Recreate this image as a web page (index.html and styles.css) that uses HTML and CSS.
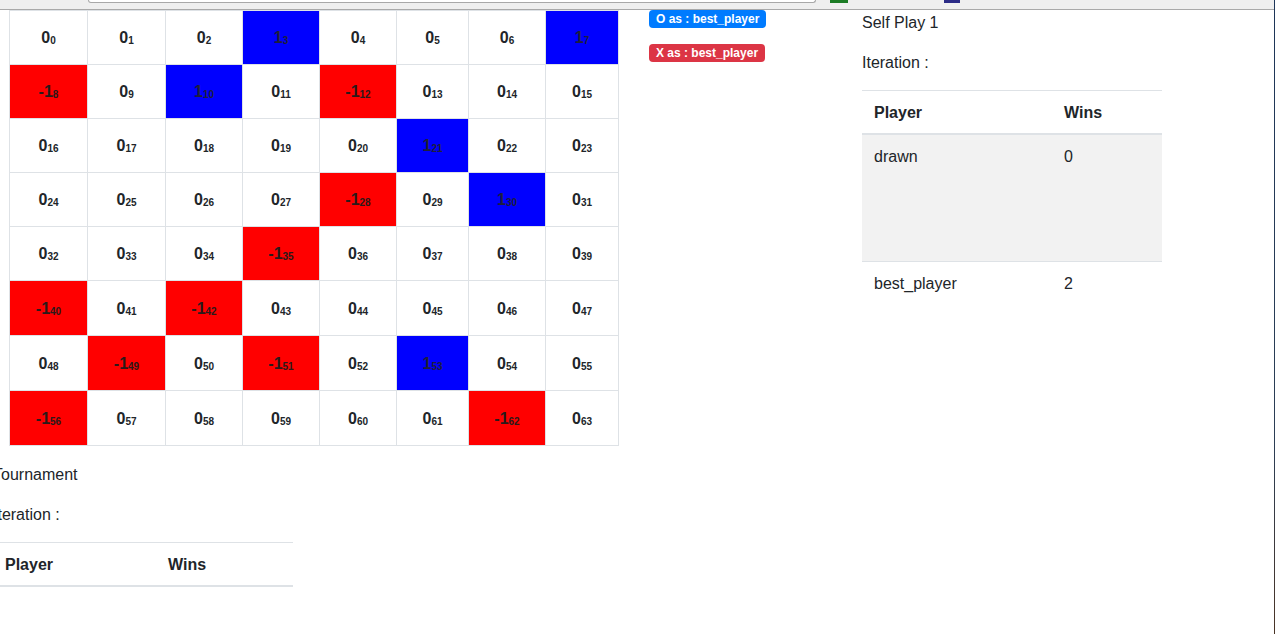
FILE: index.html
```html
<!DOCTYPE html>
<html>
<head>
<meta charset="utf-8">
<link rel="stylesheet" href="styles.css">
</head>
<body>
<div class="window">
  <div class="chrome">
    <div class="search"></div>
    <div class="ext ext-green"></div>
    <div class="ext ext-navy"></div>
  </div>
  <div class="main">
    <div class="left">
      <table class="board">
        <colgroup>
          <col class="w78"><col class="w78"><col class="w77"><col class="w77"><col class="w77"><col class="w72"><col class="w77"><col class="w73">
        </colgroup>
        <tr class="r54">
          <td><b>0</b><sub>0</sub></td><td><b>0</b><sub>1</sub></td><td><b>0</b><sub>2</sub></td><td class="blue"><b>1</b><sub>3</sub></td><td><b>0</b><sub>4</sub></td><td><b>0</b><sub>5</sub></td><td><b>0</b><sub>6</sub></td><td class="blue"><b>1</b><sub>7</sub></td>
        </tr>
        <tr class="r54">
          <td class="red"><b>-1</b><sub>8</sub></td><td><b>0</b><sub>9</sub></td><td class="blue"><b>1</b><sub>10</sub></td><td><b>0</b><sub>11</sub></td><td class="red"><b>-1</b><sub>12</sub></td><td><b>0</b><sub>13</sub></td><td><b>0</b><sub>14</sub></td><td><b>0</b><sub>15</sub></td>
        </tr>
        <tr class="r54">
          <td><b>0</b><sub>16</sub></td><td><b>0</b><sub>17</sub></td><td><b>0</b><sub>18</sub></td><td><b>0</b><sub>19</sub></td><td><b>0</b><sub>20</sub></td><td class="blue"><b>1</b><sub>21</sub></td><td><b>0</b><sub>22</sub></td><td><b>0</b><sub>23</sub></td>
        </tr>
        <tr class="r54">
          <td><b>0</b><sub>24</sub></td><td><b>0</b><sub>25</sub></td><td><b>0</b><sub>26</sub></td><td><b>0</b><sub>27</sub></td><td class="red"><b>-1</b><sub>28</sub></td><td><b>0</b><sub>29</sub></td><td class="blue"><b>1</b><sub>30</sub></td><td><b>0</b><sub>31</sub></td>
        </tr>
        <tr class="r54">
          <td><b>0</b><sub>32</sub></td><td><b>0</b><sub>33</sub></td><td><b>0</b><sub>34</sub></td><td class="red"><b>-1</b><sub>35</sub></td><td><b>0</b><sub>36</sub></td><td><b>0</b><sub>37</sub></td><td><b>0</b><sub>38</sub></td><td><b>0</b><sub>39</sub></td>
        </tr>
        <tr class="r55">
          <td class="red"><b>-1</b><sub>40</sub></td><td><b>0</b><sub>41</sub></td><td class="red"><b>-1</b><sub>42</sub></td><td><b>0</b><sub>43</sub></td><td><b>0</b><sub>44</sub></td><td><b>0</b><sub>45</sub></td><td><b>0</b><sub>46</sub></td><td><b>0</b><sub>47</sub></td>
        </tr>
        <tr class="r55">
          <td><b>0</b><sub>48</sub></td><td class="red"><b>-1</b><sub>49</sub></td><td><b>0</b><sub>50</sub></td><td class="red"><b>-1</b><sub>51</sub></td><td><b>0</b><sub>52</sub></td><td class="blue"><b>1</b><sub>53</sub></td><td><b>0</b><sub>54</sub></td><td><b>0</b><sub>55</sub></td>
        </tr>
        <tr class="r55">
          <td class="red"><b>-1</b><sub>56</sub></td><td><b>0</b><sub>57</sub></td><td><b>0</b><sub>58</sub></td><td><b>0</b><sub>59</sub></td><td><b>0</b><sub>60</sub></td><td><b>0</b><sub>61</sub></td><td class="red"><b>-1</b><sub>62</sub></td><td><b>0</b><sub>63</sub></td>
        </tr>
      </table>
      <p class="txt">Tournament</p>
      <p class="txt">Iteration :</p>
      <table class="stats stats-left">
        <thead>
          <tr><th class="c1">Player</th><th>Wins</th></tr>
        </thead>
      </table>
    </div>
    <div class="badges">
      <span class="badge badge-blue">O as : best_player</span>
      <span class="badge badge-red">X as : best_player</span>
    </div>
    <div class="selfplay">
      <p class="txt">Self Play 1</p>
      <p class="txt">Iteration :</p>
      <table class="stats stats-right">
        <thead>
          <tr><th class="c1">Player</th><th>Wins</th></tr>
        </thead>
        <tbody>
          <tr class="striped tall"><td>drawn</td><td>0</td></tr>
          <tr><td>best_player</td><td>2</td></tr>
        </tbody>
      </table>
    </div>
  </div>
</div>
<div class="edge"></div>
</body>
</html>
```

FILE: styles.css
```css
html, body {
  margin: 0;
  padding: 0;
  height: 100%;
  overflow: hidden;
  background: #fff;
}
body {
  display: flex;
  font-family: "Liberation Sans", Arial, sans-serif;
  font-size: 16px;
  line-height: 24px;
  color: #212529;
}
.window {
  flex: 1;
  min-width: 0;
  display: flex;
  flex-direction: column;
}
.edge {
  width: 1px;
  background: linear-gradient(#1d3558, #2c3e55 70%, #4a3426);
}
.chrome {
  height: 9px;
  background: #efefef;
  border-bottom: 1px solid #a9a9a9;
  display: flex;
  align-items: flex-start;
  overflow: hidden;
}
.search {
  margin-left: 88px;
  width: 726px;
  height: 2px;
  background: #fff;
  border: 1px solid #a8a8a8;
  border-top: none;
  border-radius: 0 0 4px 4px;
}
.ext {
  height: 3px;
}
.ext-green {
  margin-left: 14px;
  width: 18px;
  background: #1c7c25;
}
.ext-navy {
  margin-left: 96px;
  width: 16px;
  background: #2b2b86;
}
.main {
  display: flex;
  align-items: flex-start;
}
.left {
  margin-left: -7px;
  width: 626px;
}
.board {
  margin-left: 16px;
  border-collapse: collapse;
  table-layout: fixed;
  width: 610px;
  margin-bottom: 16px;
}
.w78 { width: 78px; }
.w77 { width: 77px; }
.w73 { width: 73px; }
.w72 { width: 72px; }
.r54 { height: 54px; }
.r55 { height: 55px; }
.board td {
  border: 1px solid #dee2e6;
  padding: 0;
  text-align: center;
  vertical-align: middle;
  font-family: "Liberation Sans", Arial, sans-serif;
  font-weight: 700;
  font-size: 16px;
  line-height: 20px;
  color: #212529;
  white-space: nowrap;
}
.board td b {
  font-weight: 700;
  padding-top: 1px;
  display: inline-block;
}
.board sub {
  font-size: 10px;
  font-weight: 700;
  vertical-align: -1px;
  line-height: 0;
}
.board td.blue { background: #0000ff; color: #1f1f3a; }
.board td.red { background: #ff0000; color: #2a1a1a; }
.txt {
  margin: 0 0 16px 0;
  padding-top: 1px;
  height: 23px;
}
.badges {
  margin-left: 30px;
  width: 213px;
  display: flex;
  flex-direction: column;
  align-items: flex-start;
  gap: 16px;
}
.badge {
  display: inline-block;
  font-family: "Liberation Sans", Arial, sans-serif;
  font-size: 12px;
  font-weight: 700;
  line-height: 12px;
  padding: 3px 7px;
  border-radius: 4px;
  color: #fff;
}
.badge-blue { background: #007bff; }
.badge-red { background: #dc3545; }
.selfplay {
  width: 300px;
}
.stats {
  width: 300px;
  border-collapse: collapse;
  margin-bottom: 16px;
}
.stats th, .stats td {
  text-align: left;
  padding: 10px 12px 8px 12px;
  border-top: 1px solid #dee2e6;
  vertical-align: top;
  line-height: 24px;
}
.stats thead th {
  border-bottom: 2px solid #dee2e6;
  font-weight: 700;
}
.stats-left .c1 { width: 139px; }
.stats-right .c1 { width: 166px; }
.striped { background: #f2f2f2; }
.tall { height: 127px; }
```
